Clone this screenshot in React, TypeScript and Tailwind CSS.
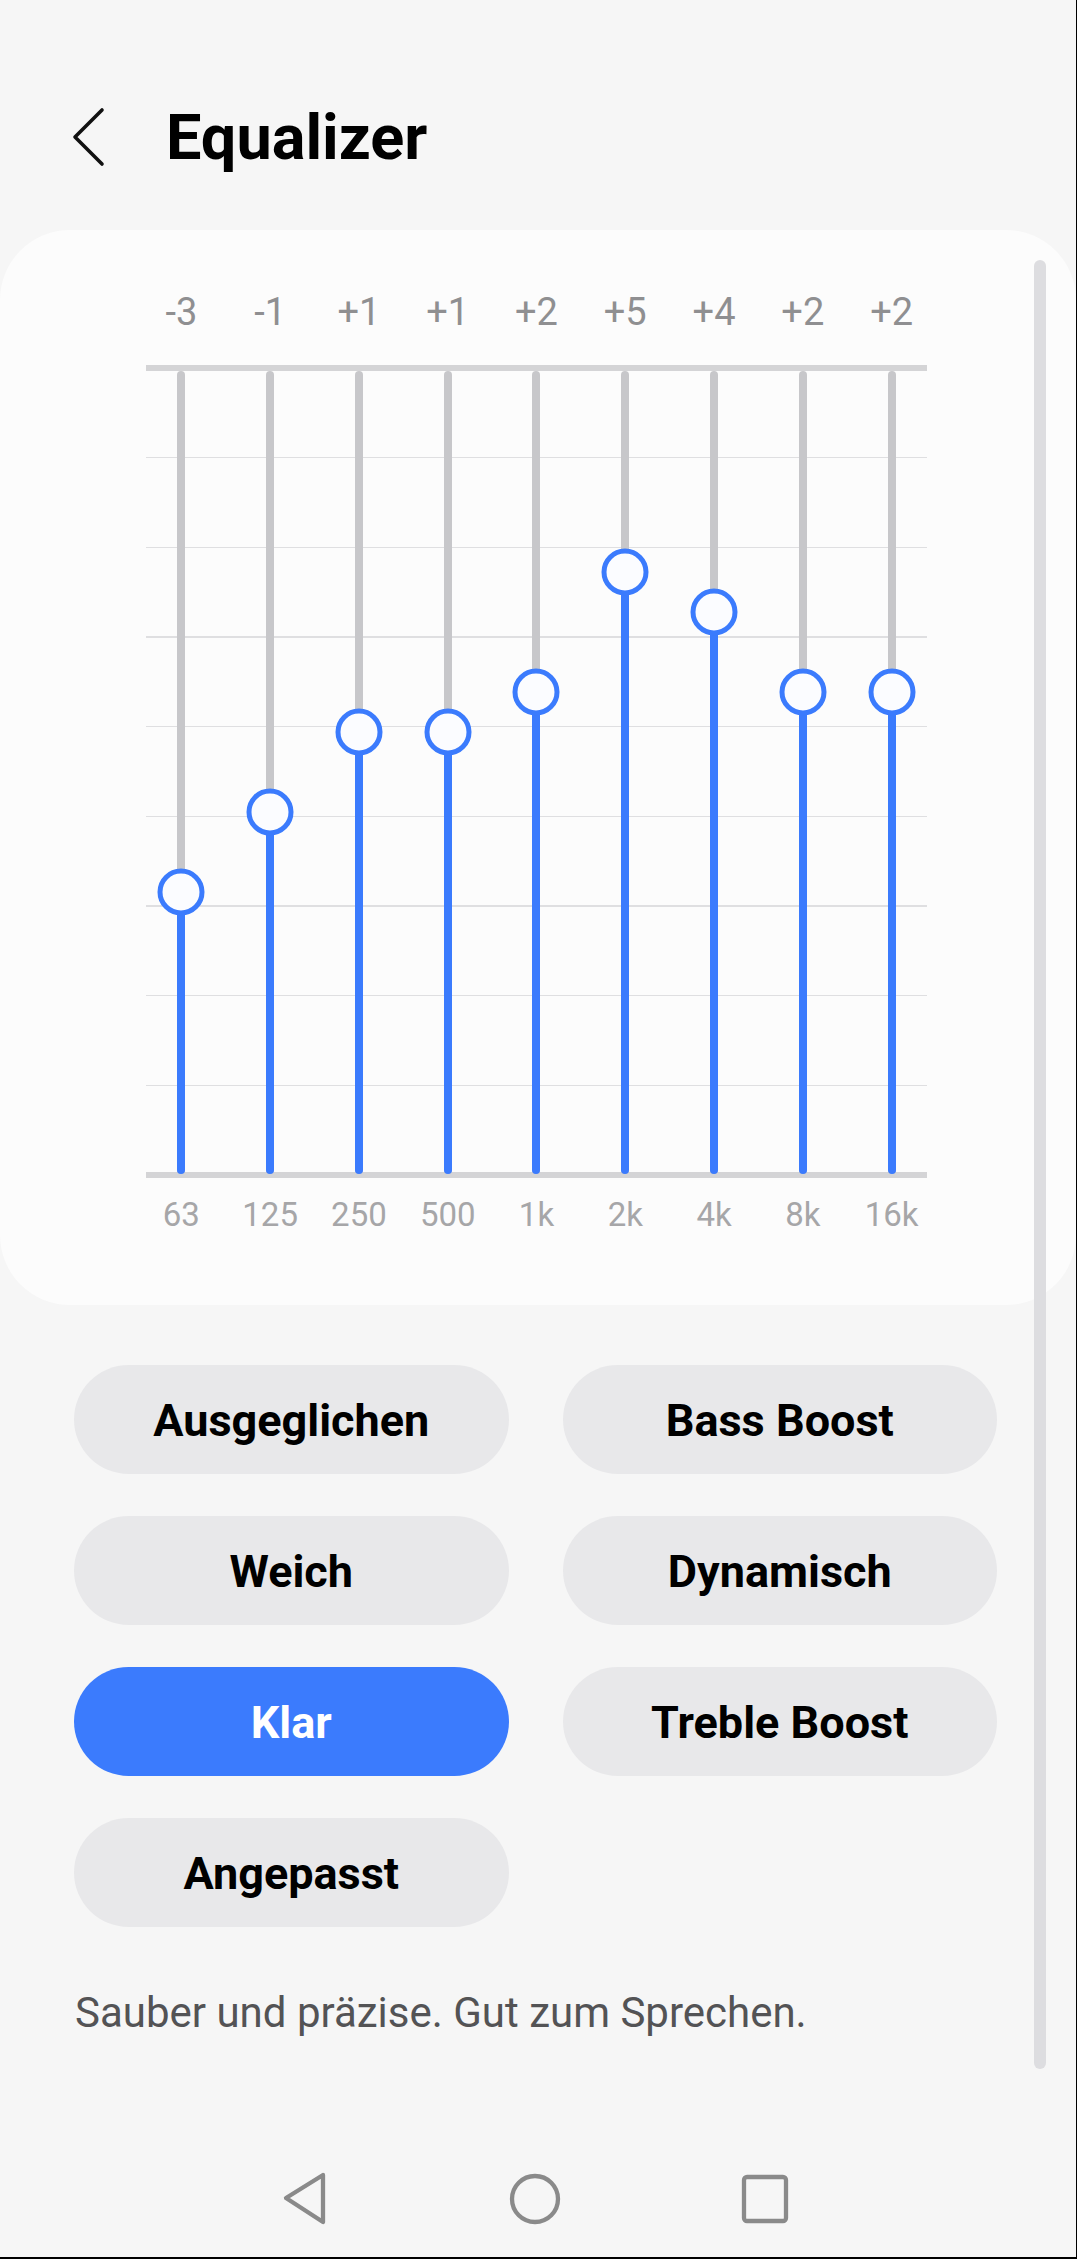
import React from "react"

// Equalizer-Band: Frequenz + Gain in dB
const bands = [
  { freq: "63", gain: -3 },
  { freq: "125", gain: -1 },
  { freq: "250", gain: 1 },
  { freq: "500", gain: 1 },
  { freq: "1k", gain: 2 },
  { freq: "2k", gain: 5 },
  { freq: "4k", gain: 4 },
  { freq: "8k", gain: 2 },
  { freq: "16k", gain: 2 },
]

const presets = ["Ausgeglichen", "Bass Boost", "Weich", "Dynamisch", "Klar", "Treble Boost", "Angepasst"]

// chart geometry (px, relative to chart box)
const ZERO_Y = 407
const PX_PER_DB = 40
const TRACK_TOP = 6
const TRACK_BOTTOM = 809
const GRID_TOP = 3
const GRID_STEP = 89.67

const fmt = (g: number) => (g > 0 ? `+${g}` : `${g}`)

const BackIcon = () => (
  <svg width="34" height="60" viewBox="0 0 34 60" fill="none">
    <path d="M30 3 L3 30 L30 57" stroke="#111" strokeWidth="3.6" strokeLinecap="round" strokeLinejoin="round" />
  </svg>
)

const EqChart = () => {
  return (
    <div className="relative ml-[137px] mt-[30px] h-[813px] w-[799px]">
      {/* horizontal grid */}
      {Array.from({ length: 10 }).map((_, i) => {
        const thick = i === 0 || i === 9
        const h = thick ? 6 : 1.5
        return (
          <div
            key={i}
            className={thick ? "absolute left-[9px] right-[9px] bg-[#d4d4d6]" : "absolute left-[9px] right-[9px] bg-[#dfdfe1]"}
            style={{ top: GRID_TOP + i * GRID_STEP - h / 2, height: h }}
          />
        )
      })}
      {/* sliders */}
      <div className="absolute inset-0 grid grid-cols-9">
        {bands.map((b) => {
          const cy = ZERO_Y - b.gain * PX_PER_DB
          return (
            <div key={b.freq} className="relative">
              <div
                className="absolute left-1/2 w-[8px] -translate-x-1/2 rounded-full bg-[#c7c7ca]"
                style={{ top: TRACK_TOP, height: TRACK_BOTTOM - TRACK_TOP }}
              />
              <div
                className="absolute left-1/2 w-[8px] -translate-x-1/2 rounded-b-full bg-[#3b7bfd]"
                style={{ top: cy, height: TRACK_BOTTOM - cy }}
              />
              <div
                className="absolute left-1/2 h-[47px] w-[47px] -translate-x-1/2 -translate-y-1/2 rounded-full border-[5px] border-[#3b7bfd] bg-[#fbfcff]"
                style={{ top: cy }}
              />
            </div>
          )
        })}
      </div>
    </div>
  )
}

export default function App() {
  const selected = "Klar"
  return (
    <div
      className="relative min-h-[2259px] w-[1077px] overflow-hidden border-r border-b-2 border-black bg-[#f6f6f6]"
      style={{ fontFamily: "Roboto, 'Noto Sans', sans-serif" }}
    >
      {/* header */}
      <div className="flex h-[230px] items-center pt-[44px] pl-[72px]">
        <BackIcon />
        <h1 className="ml-[60px] text-[63px] leading-none font-bold text-black">Equalizer</h1>
      </div>

      {/* chart card */}
      <div className="rounded-[70px] bg-[#fcfcfc] pt-[59px] pb-[70px]">
        <div className="ml-[137px] grid w-[799px] grid-cols-9 text-center text-[38px] leading-[46px] text-[#8f8f91]">
          {bands.map((b) => (
            <span key={b.freq}>{fmt(b.gain)}</span>
          ))}
        </div>
        <EqChart />
        <div className="mt-[17px] ml-[137px] grid w-[799px] grid-cols-9 text-center text-[33px] leading-[40px] text-[#a6a6a8]">
          {bands.map((b) => (
            <span key={b.freq}>{b.freq}</span>
          ))}
        </div>
      </div>

      {/* presets */}
      <div className="mt-[60px] ml-[74px] grid w-[923px] grid-cols-2 gap-x-[54px] gap-y-[42px]">
        {presets.map((p) => (
          <button
            key={p}
            className={
              p === selected
                ? "flex h-[109px] items-center justify-center rounded-full bg-[#3b7bfd] pt-[3px] text-[45px] font-bold text-white"
                : "flex h-[109px] items-center justify-center rounded-full bg-[#e8e8ea] pt-[3px] text-[45px] font-bold text-black"
            }
          >
            {p}
          </button>
        ))}
      </div>

      <p className="mt-[62px] ml-[75px] text-[42px] leading-[48px] text-[#535355]">Sauber und präzise. Gut zum Sprechen.</p>

      {/* android nav bar */}
      <div className="mt-[112px] flex h-[100px] items-center pl-[190px]">
        <div className="flex w-[230px] justify-center">
          <svg width="48" height="56" viewBox="0 0 48 56" fill="none">
            <path d="M42 4 L5 27 L42 51 Z" stroke="#8a8a8a" strokeWidth="4.3" strokeLinejoin="round" />
          </svg>
        </div>
        <div className="flex w-[230px] justify-center">
          <svg width="54" height="54" viewBox="0 0 54 54" fill="none">
            <circle cx="27" cy="27" r="23" stroke="#8a8a8a" strokeWidth="4.3" />
          </svg>
        </div>
        <div className="flex w-[230px] justify-center">
          <svg width="48" height="50" viewBox="0 0 48 50" fill="none">
            <rect x="3" y="3" width="42" height="44" rx="3" stroke="#8a8a8a" strokeWidth="4.3" />
          </svg>
        </div>
      </div>

      {/* scrollbar */}
      <div className="absolute top-[260px] left-[1034px] h-[1809px] w-[12px] rounded-full bg-[#dddde0]" />
    </div>
  )
}
